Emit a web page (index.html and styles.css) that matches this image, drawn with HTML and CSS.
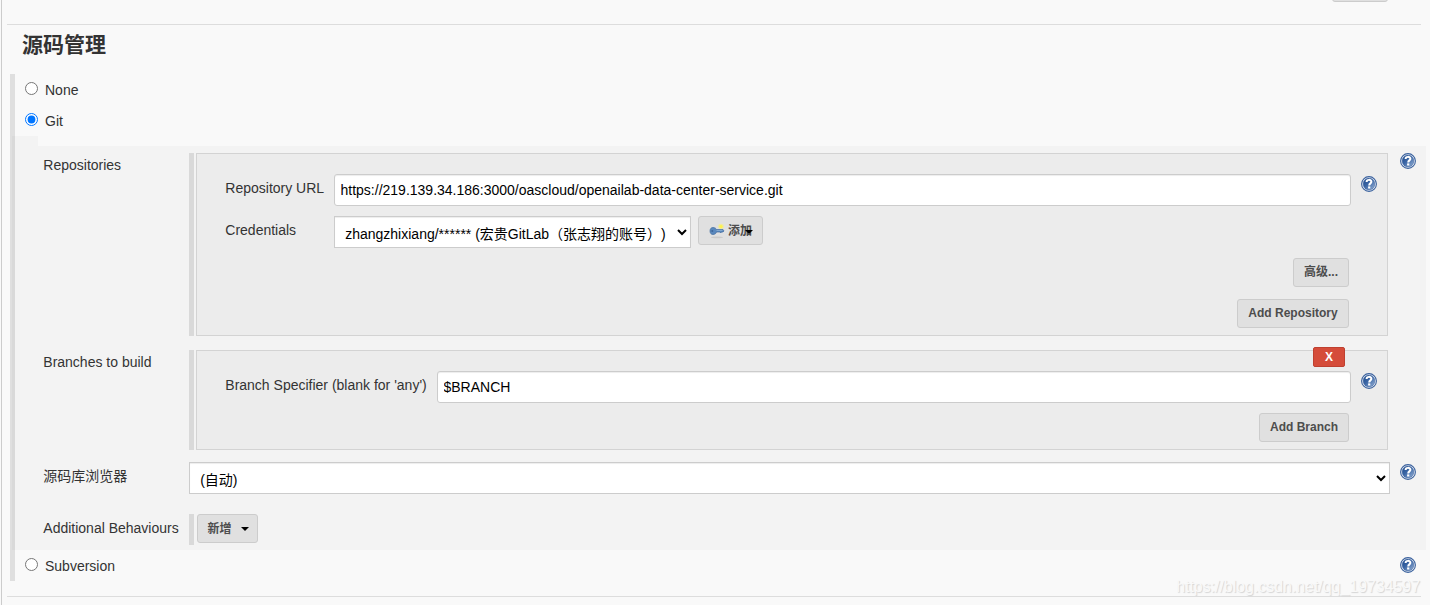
FILE: index.html
```html
<!DOCTYPE html>
<html lang="zh-CN">
<head>
  <meta charset="UTF-8">
  <title>源码管理</title>
  <link rel="stylesheet" href="styles.css">
</head>
<body>
  <svg class="defs" width="0" height="0">
    <defs>
      <linearGradient id="helpBlue" x1="0" y1="0" x2="1" y2="1">
        <stop offset="0" stop-color="#1d4a8c"/>
        <stop offset="0.45" stop-color="#3b66a5"/>
        <stop offset="1" stop-color="#9ab5d8"/>
      </linearGradient>
      <symbol id="help" viewBox="0 0 16 16">
        <circle cx="8" cy="8" r="7.4" fill="#f4f7fb" stroke="#3a619d" stroke-width="1.1"/>
        <circle cx="8" cy="8" r="5.9" fill="url(#helpBlue)" stroke="#3a619d" stroke-width="0.5"/>
        <path d="M5.6 6C5.6 3.2 10.4 3.2 10.4 5.8C10.4 7.4 8.2 7.4 8.2 9.4" fill="none" stroke="#fff" stroke-width="2"/>
        <rect x="7.1" y="10.4" width="2.2" height="2.1" fill="#fff"/>
      </symbol>
    </defs>
  </svg>

  <div class="page">
    <div class="previous"><button class="btn"></button></div>

    <section class="section">
      <h2>源码管理</h2>

      <div class="options">
        <label class="option"><input type="radio" name="scm"><span>None</span></label>
        <label class="option"><input type="radio" name="scm" checked><span>Git</span></label>

        <div class="tab"></div>
        <div class="panel">
          <div class="row row-repos">
            <div class="name">Repositories</div>
            <div class="chunk">
              <div class="box">
                <div class="field">
                  <label class="url-label" for="url">Repository URL</label>
                  <input type="text" id="url" value="https://219.139.34.186:3000/oascloud/openailab-data-center-service.git">
                  <svg class="help"><use href="#help"/></svg>
                </div>
                <div class="field credentials">
                  <label class="url-label" for="cred">Credentials</label>
                  <select id="cred"><option>zhangzhixiang/****** (宏贵GitLab（张志翔的账号）)</option></select>
                  <button class="btn add-cred">
                    <svg class="key" viewBox="0 0 16 16">
                      <ellipse cx="8" cy="14.4" rx="6" ry="0.9" fill="#cacaca"/>
                      <circle cx="12" cy="3.5" r="2.8" fill="#efe9a0"/>
                      <circle cx="12" cy="3.5" r="1.6" fill="#fff34a"/>
                      <path d="M4 4.5C6 4.5 7 5.5 7.5 6.5H14L15 8L14 9H12.5L11.8 10L11 9H7.5C7 10.5 6 11.5 4 11.5C2 11.5 1 10 1 8C1 6 2 4.5 4 4.5Z" fill="#5a88bd" stroke="#426c9f" stroke-width="0.7"/>
                      <circle cx="3.3" cy="8" r="1" fill="#3e6699"/>
                      <path d="M7.5 7.4H13.5" stroke="#9abbdd" stroke-width="0.7"/>
                    </svg>
                    <span>添加</span><i class="caret"></i>
                  </button>
                </div>
                <div class="actions advanced"><button class="btn cjk">高级...</button></div>
                <div class="actions"><button class="btn add-repo">Add Repository</button></div>
              </div>
            </div>
            <svg class="help"><use href="#help"/></svg>
          </div>

          <div class="row row-branches">
            <div class="name">Branches to build</div>
            <div class="chunk">
              <div class="box">
                <button class="delete">X</button>
                <div class="field">
                  <label class="branch-label" for="branch">Branch Specifier (blank for 'any')</label>
                  <input type="text" id="branch" value="$BRANCH">
                  <svg class="help"><use href="#help"/></svg>
                </div>
                <div class="actions add-branch"><button class="btn">Add Branch</button></div>
              </div>
            </div>
          </div>

          <div class="row row-browser">
            <div class="name">源码库浏览器</div>
            <select><option>(自动)</option></select>
            <svg class="help"><use href="#help"/></svg>
          </div>

          <div class="row row-extra">
            <div class="name">Additional Behaviours</div>
            <div class="chunk">
              <button class="btn new">新增<i class="caret"></i></button>
            </div>
          </div>
        </div>

        <label class="option last">
          <input type="radio" name="scm"><span>Subversion</span>
          <svg class="help"><use href="#help"/></svg>
        </label>
      </div>
    </section>
    <div class="watermark">https://blog.csdn.net/qq_19734597</div>
  </div>
</body>
</html>
```
FILE: styles.css
```css
* {
  box-sizing: border-box;
}

body {
  margin: 0;
  background: #f9f9f9;
  color: #333;
  font-family: "Liberation Sans", "Noto Sans CJK SC", sans-serif;
  font-size: 14px;
  line-height: 20px;
}

.defs {
  display: block;
}

.page {
  position: relative;
  height: 605px;
  margin-left: 1px;
  padding: 0 9px 0 5px;
  border-left: 1px solid #ccc;
  overflow: hidden;
}

.previous {
  display: flex;
  justify-content: flex-end;
  height: 24px;
  padding-right: 33px;
}

.previous .btn {
  width: 56px;
  margin-top: -27px;
}

.section {
  height: 573px;
  border-top: 1px solid #ddd;
  border-bottom: 1px solid #ddd;
}

h2 {
  height: 49px;
  margin: 0;
  padding-left: 15px;
  font-size: 21px;
  line-height: 40px;
}

.options {
  height: 507px;
  margin-left: 3px;
  border-left: 5px solid #dfdfdf;
}

.option {
  display: flex;
  align-items: flex-start;
  height: 31px;
  padding-left: 10px;
}

.option input {
  width: 13px;
  height: 13px;
  margin: 8px 7px 0 0;
}

.option span {
  padding-top: 6px;
}

.option.last .help {
  margin: 7px 5px 0 auto;
}

.tab,
.panel {
  margin-left: -3px;
  background: rgba(0, 0, 0, 0.024);
}

.tab {
  width: 26px;
  height: 10px;
}

.panel {
  height: 404px;
  margin-right: -5px;
  padding: 7px 10px 0 31px;
}

.row {
  display: grid;
  grid-template-columns: 146px 1201px 16px;
  align-items: start;
}

.row > .help {
  margin-left: 10px;
}

.name {
  padding: 2px 0 0 0.3px;
  white-space: nowrap;
}

.row-repos {
  height: 197px;
}

.row-branches {
  height: 112px;
}

.row-browser {
  height: 52px;
}

.row-browser .name {
  padding-top: 4px;
}

.row-browser .help {
  margin-top: 2px;
}

.row-extra .name {
  padding-top: 4px;
}

.chunk {
  border-left: 5px solid #d9d9d9;
  padding: 0 2px;
}

.row-extra .chunk {
  height: 31px;
  padding-left: 3px;
}

.box {
  position: relative;
  height: 183px;
  padding: 20px 10px 0 28px;
  background: #ececec;
  border: 1px solid #d3d3d3;
}

.row-branches .box {
  height: 100px;
}

.field {
  display: flex;
  align-items: flex-start;
}

.field label {
  padding: 4px 0 0 0.3px;
  white-space: nowrap;
}

.url-label {
  width: 109px;
}

.branch-label {
  width: 212px;
}

.field .help {
  margin: 2px 0 0 10px;
}

.credentials {
  margin-top: 10px;
}

input[type="text"],
select {
  height: 32px;
  border: 1px solid #ccc;
  background: #fff;
  color: #000;
  font-family: inherit;
  font-size: 14px;
  box-shadow: inset 0 1px 1px rgba(0, 0, 0, 0.075);
}

input[type="text"] {
  flex: 1;
  padding: 6px 5.5px;
  border-radius: 3px;
}

select {
  width: 1201px;
  padding: 8px 0 4px 6.2px;
  border-radius: 0;
  text-spacing-trim: space-all;
}

.credentials select {
  width: 357px;
}

.btn {
  height: 29px;
  padding: 0 10px;
  background: #e0e0e0;
  border: 1px solid #ccc;
  border-radius: 3px;
  color: #4d4d4d;
  font-family: inherit;
  font-size: 12px;
  font-weight: bold;
  line-height: 25px;
  white-space: nowrap;
}

.cjk {
  padding: 0 9px;
  width: 56px;
}

.add-repo {
  width: 112px;
}

.add-cred {
  display: flex;
  align-items: center;
  width: 65px;
  margin-left: 7px;
}

.add-cred span {
  padding-top: 1px;
}

.key {
  flex: none;
  width: 16px;
  height: 16px;
  margin-right: 3px;
}

.caret {
  display: inline-block;
  border: 4px solid transparent;
  border-top-color: #000;
  border-bottom: 0;
}

.add-cred .caret {
  flex: none;
  margin: 2px 0 0 -7px;
}

.new {
  display: flex;
  align-items: center;
  width: 61px;
  padding: 1px 9px 0 9.5px;
}

.new .caret {
  margin: 0 0 0 9px;
}

.actions {
  display: flex;
  justify-content: flex-end;
  margin-top: 12px;
  padding-right: 28px;
}

.actions.advanced,
.actions.add-branch {
  margin-top: 10px;
}

.delete {
  position: absolute;
  top: -4px;
  right: 42px;
  width: 32px;
  height: 20px;
  padding: 0;
  background: #d54c3a;
  border: 1px solid #bf4030;
  border-radius: 2px;
  color: #fff;
  font-family: inherit;
  font-size: 12px;
  font-weight: bold;
  line-height: 17px;
}

.help {
  flex: none;
  width: 16px;
  height: 16px;
}

.watermark {
  position: absolute;
  right: 10px;
  top: 577px;
  color: #f9f9f9;
  font-size: 15.9px;
  text-shadow: 1px 1px 1px #d4d4d4;
}
```
